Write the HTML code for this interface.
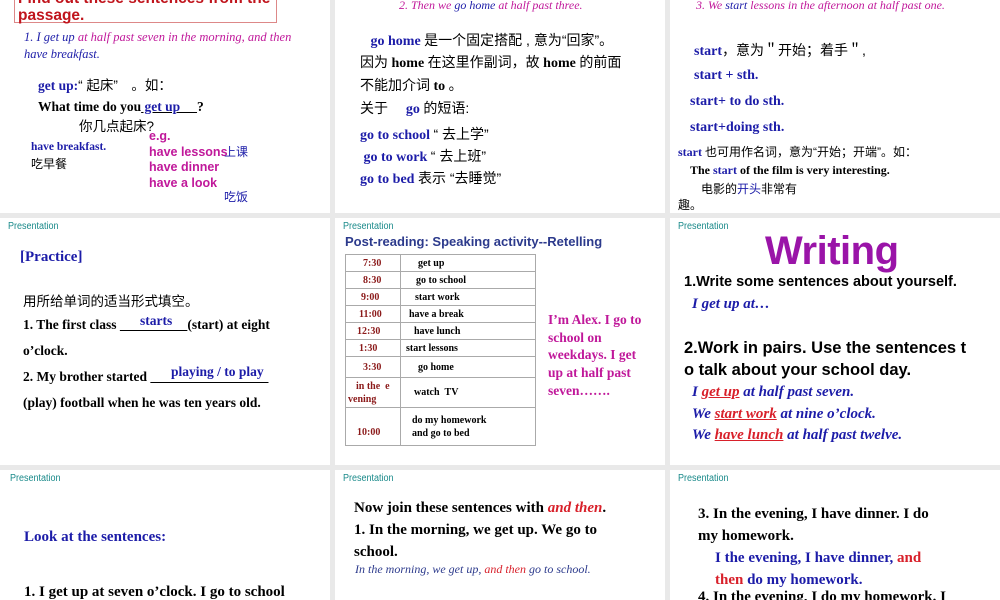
<!DOCTYPE html>
<html><head><meta charset="utf-8"><style>
*{margin:0;padding:0;box-sizing:border-box}
body{width:1000px;height:600px;background:#e9e9e9;position:relative;overflow:hidden;font-family:"Liberation Serif","Noto Serif CJK SC",serif}
.p{position:absolute;background:#fff;overflow:hidden}
.a{position:absolute;white-space:nowrap}
.pr{font-family:"Liberation Sans",sans-serif;font-size:10px;color:#1a8a8a;transform:scaleX(.9);transform-origin:left}
.b{font-weight:bold}
.bl{color:#1c1ca8}
.mg{color:#c0189a}
.k{font-family:"Liberation Sans","Noto Sans CJK SC",sans-serif;font-weight:normal}
.i{font-style:italic}
.red{color:#d8202a}
.s{font-family:"Liberation Sans",sans-serif;font-weight:bold}
.l{line-height:18px}
</style></head><body>

<!-- R1C1 -->
<div class="p" style="left:0;top:0;width:330px;height:213px">
<div class="a" style="left:14px;top:-10px;width:263px;height:33px;border:1px solid #d88;"></div>
<div class="a s" style="left:18px;top:-10px;font-size:15.5px;color:#c0141c;line-height:17px">Find out these sentences from the<br>passage.</div>
<div class="a i" style="left:24px;top:29px;font-size:12.5px;color:#c0189a;line-height:17px"><span class="bl">1. I get up</span> at half past seven in the morning, and then<br><span class="bl">have breakfast.</span></div>
<div class="a b l" style="left:38px;top:77px;font-size:13.5px"><span class="bl">get up:</span><span class="k">“ 起床”　。如：</span></div>
<div class="a b l" style="left:38px;top:98px;font-size:13.5px">What time do you<span style="text-decoration:underline"><span class="bl">&nbsp;get up&nbsp;&nbsp;&nbsp;&nbsp;&nbsp;</span></span>?</div>
<div class="a k l" style="left:79px;top:118px;font-size:13.5px">你几点起床?</div>
<div class="a b bl" style="left:31px;top:141px;font-size:11.5px">have breakfast.</div>
<div class="a k" style="left:31px;top:155px;font-size:12px">吃早餐</div>
<div class="a s" style="left:149px;top:129px;font-size:12.5px;color:#c0189a;line-height:15.5px">e.g.<br>have lessons<br>have dinner<br>have a look</div>
<div class="a k bl" style="left:224px;top:143px;font-size:12px">上课</div>
<div class="a k bl" style="left:224px;top:188px;font-size:12px">吃饭</div>
</div>

<!-- R1C2 -->
<div class="p" style="left:335px;top:0;width:330px;height:213px">
<div class="a i mg" style="left:64px;top:-2px;font-size:12px">2. Then we <span class="bl">go home</span> at half past three.</div>
<div class="a b l" style="left:25px;top:31px;font-size:14px"><span class="bl">&nbsp;&nbsp;&nbsp;go home</span> <span class="k">是一个固定搭配 , 意为“回家”。</span></div>
<div class="a b l" style="left:25px;top:53px;font-size:14px"><span class="k">因为</span> home <span class="k">在这里作副词，故</span> home <span class="k">的前面</span></div>
<div class="a b l" style="left:25px;top:76px;font-size:14px"><span class="k">不能加介词</span> to <span class="k">。</span></div>
<div class="a b l" style="left:25px;top:99px;font-size:14px"><span class="k">关于 　</span><span class="bl">go</span> <span class="k">的短语:</span></div>
<div class="a b l" style="left:25px;top:125px;font-size:14px"><span class="bl">go to school</span> <span class="k">“ 去上学”</span></div>
<div class="a b l" style="left:25px;top:147px;font-size:14px"><span class="bl">&nbsp;go to work</span> <span class="k">“ 去上班”</span></div>
<div class="a b l" style="left:25px;top:169px;font-size:14px"><span class="bl">go to bed</span> <span class="k">表示 “去睡觉”</span></div>
</div>

<!-- R1C3 -->
<div class="p" style="left:670px;top:0;width:330px;height:213px">
<div class="a i mg" style="left:26px;top:-2px;font-size:12px">3. We <span class="bl">start</span> lessons in the afternoon at half past one.</div>
<div class="a b bl l" style="left:24px;top:41px;font-size:14px">start<span class="k" style="color:#000">，意为＂开始；着手＂,</span></div>
<div class="a b bl" style="left:24px;top:68px;font-size:14px">start + sth.</div>
<div class="a b bl" style="left:20px;top:94px;font-size:14px">start+ to do sth.</div>
<div class="a b bl" style="left:20px;top:120px;font-size:14px">start+doing sth.</div>
<div class="a b" style="left:8px;top:143px;font-size:12px"><span class="bl">start</span> <span class="k">也可用作名词，意为“开始；开端”。如：</span></div>
<div class="a b" style="left:20px;top:163px;font-size:12px">The <span class="bl">start</span> of the film is very interesting.</div>
<div class="a k" style="left:31px;top:180px;font-size:12px">电影的<span class="bl">开头</span>非常有</div>
<div class="a k" style="left:8px;top:196px;font-size:12px">趣。</div>
</div>

<!-- R2C1 -->
<div class="p" style="left:0;top:218px;width:330px;height:247px">
<div class="a pr" style="left:8px;top:3px">Presentation</div>
<div class="a b bl" style="left:20px;top:31px;font-size:15px">[Practice]</div>
<div class="a k" style="left:23px;top:72px;font-size:13.5px">用所给单词的适当形式填空。</div>
<div class="a b" style="left:23px;top:99px;font-size:13.5px">1. The first class <span style="text-decoration:underline">&nbsp;&nbsp;&nbsp;&nbsp;&nbsp;&nbsp;&nbsp;&nbsp;&nbsp;&nbsp;&nbsp;&nbsp;&nbsp;&nbsp;&nbsp;&nbsp;&nbsp;&nbsp;&nbsp;&nbsp;</span>(start) at eight</div>
<div class="a b bl" style="left:140px;top:95px;font-size:13.5px">starts</div>
<div class="a b" style="left:23px;top:125px;font-size:13.5px">o’clock.</div>
<div class="a b" style="left:23px;top:151px;font-size:13.5px">2. My brother started <span style="text-decoration:underline">&nbsp;&nbsp;&nbsp;&nbsp;&nbsp;&nbsp;&nbsp;&nbsp;&nbsp;&nbsp;&nbsp;&nbsp;&nbsp;&nbsp;&nbsp;&nbsp;&nbsp;&nbsp;&nbsp;&nbsp;&nbsp;&nbsp;&nbsp;&nbsp;&nbsp;&nbsp;&nbsp;&nbsp;&nbsp;&nbsp;&nbsp;&nbsp;&nbsp;&nbsp;&nbsp;</span></div>
<div class="a b bl" style="left:171px;top:146px;font-size:13.5px">playing / to play</div>
<div class="a b" style="left:23px;top:177px;font-size:13.5px">(play) football when he was ten years old.</div>
</div>

<!-- R2C2 -->
<div class="p" style="left:335px;top:218px;width:330px;height:247px">
<div class="a pr" style="left:8px;top:3px">Presentation</div>
<div class="a s" style="left:10px;top:16px;font-size:13px;color:#2c3a8c">Post-reading: Speaking activity--Retelling</div>
<table class="a b" style="left:10px;top:36px;width:191px;border-collapse:collapse;font-size:10px;border:1px solid #888">
<colgroup><col style="width:55px"><col></colgroup>
<tr style="height:17px"><td style="color:#8b1a1a;padding-left:17px;border:1px solid #aaa">7:30</td><td style="border:1px solid #aaa;padding-left:17px">get up</td></tr>
<tr style="height:17px"><td style="color:#8b1a1a;padding-left:17px;border:1px solid #aaa">8:30</td><td style="border:1px solid #aaa;padding-left:15px">go to school</td></tr>
<tr style="height:17px"><td style="color:#8b1a1a;padding-left:15px;border:1px solid #aaa">9:00</td><td style="border:1px solid #aaa;padding-left:14px">start work</td></tr>
<tr style="height:17px"><td style="color:#8b1a1a;padding-left:13px;border:1px solid #aaa">11:00</td><td style="border:1px solid #aaa;padding-left:8px">have a break</td></tr>
<tr style="height:17px"><td style="color:#8b1a1a;padding-left:11px;border:1px solid #aaa">12:30</td><td style="border:1px solid #aaa;padding-left:13px">have lunch</td></tr>
<tr style="height:17px"><td style="color:#8b1a1a;padding-left:13px;border:1px solid #aaa">1:30</td><td style="border:1px solid #aaa;padding-left:5px">start lessons</td></tr>
<tr style="height:21px"><td style="color:#8b1a1a;padding-left:17px;border:1px solid #aaa">3:30</td><td style="border:1px solid #aaa;padding-left:17px">go home</td></tr>
<tr style="height:30px"><td style="color:#8b1a1a;padding-left:10px;border:1px solid #aaa;line-height:13px">in the &nbsp;e<br><span style="margin-left:-8px">vening</span></td><td style="border:1px solid #aaa;padding-left:13px">watch &nbsp;TV</td></tr>
<tr style="height:38px"><td style="color:#8b1a1a;padding-left:11px;padding-top:12px;border:1px solid #aaa">10:00</td><td style="border:1px solid #aaa;padding-left:11px;line-height:13px">do my homework<br>and go to bed</td></tr>
</table>
<div class="a b mg" style="left:213px;top:93px;font-size:13.5px;line-height:17.7px">I’m Alex. I go to<br>school on<br>weekdays. I get<br>up at half past<br>seven…….</div>
</div>

<!-- R2C3 -->
<div class="p" style="left:670px;top:218px;width:330px;height:247px">
<div class="a pr" style="left:8px;top:3px">Presentation</div>
<div class="a s" style="left:95px;top:11px;font-size:40px;color:#9a14a8;letter-spacing:-0.5px">Writing</div>
<div class="a s" style="left:14px;top:56px;font-size:14.5px">1.Write some sentences about yourself.</div>
<div class="a b i bl" style="left:22px;top:78px;font-size:15px">I get up at…</div>
<div class="a s" style="left:14px;top:119px;font-size:16.5px;line-height:22px">2.Work in pairs. Use the sentences t<br>o talk about your school day.</div>
<div class="a b i bl" style="left:22px;top:164px;font-size:15px;line-height:21.5px">I <u class="red">get up</u> at half past seven.<br>We <u class="red">start work</u> at nine o’clock.<br>We <u class="red">have lunch</u> at half past twelve.</div>
</div>

<!-- R3C1 -->
<div class="p" style="left:0;top:470px;width:330px;height:130px">
<div class="a pr" style="left:10px;top:3px">Presentation</div>
<div class="a b bl" style="left:24px;top:59px;font-size:15px">Look at the sentences:</div>
<div class="a b" style="left:24px;top:114px;font-size:15px">1. I get up at seven o’clock. I go to school</div>
</div>

<!-- R3C2 -->
<div class="p" style="left:335px;top:470px;width:330px;height:130px">
<div class="a pr" style="left:8px;top:3px">Presentation</div>
<div class="a b" style="left:19px;top:27px;font-size:15px;line-height:22px">Now join these sentences with <span class="i red">and then</span>.<br>1. In the morning, we get up. We go to<br>school.</div>
<div class="a i" style="left:20px;top:92px;font-size:12px;color:#2c3a8c">In the morning, we get up, <span class="red">and then</span> go to school.</div>
</div>

<!-- R3C3 -->
<div class="p" style="left:670px;top:470px;width:330px;height:130px">
<div class="a pr" style="left:8px;top:3px">Presentation</div>
<div class="a b" style="left:28px;top:33px;font-size:15px;line-height:22px">3. In the evening, I have dinner. I do<br>my homework.</div>
<div class="a b bl" style="left:45px;top:77px;font-size:15px;line-height:22px">I the evening, I have dinner, <span class="red">and</span><br><span class="red">then</span> do my homework.</div>
<div class="a b" style="left:28px;top:119px;font-size:15px">4. In the evening, I do my homework. I</div>
</div>

</body></html>
